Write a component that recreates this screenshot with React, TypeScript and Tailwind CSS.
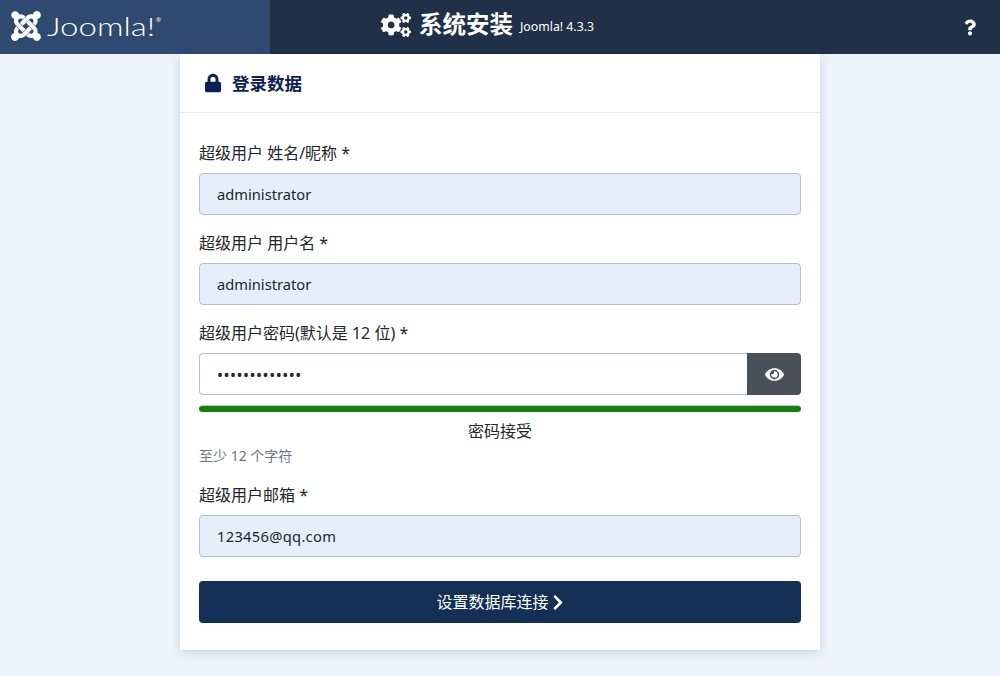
import React from 'react';
import { FaChevronRight, FaCogs, FaEye, FaJoomla, FaLock, FaQuestion } from 'react-icons/fa';

const FONT = "font-['Noto_Sans','Noto_Sans_CJK_SC',sans-serif]";

const Field: React.FC<{ label: string; value: string; valueClass?: string }> = ({ label, value, valueClass }) => (
  <div className="mb-4">
    <label className="block h-6 mb-2 leading-6 text-[16px] text-[#22262a]">{label}</label>
    <div className={`h-[42px] px-[17px] flex items-center bg-[#e7eefb] border border-[#b2bfd9] rounded text-[14.7px] text-[#22262a] ${valueClass ?? ''}`}>
      {value}
    </div>
  </div>
);

export default function App() {
  return (
    <div className={`min-h-[676px] bg-[#eff4fc] ${FONT}`}>
      {/* 头部 */}
      <header className="relative h-[54px] flex items-center bg-[#1f3047] text-white">
        <div className="relative w-[270px] h-full flex items-center pl-[9px] bg-[#2e4a70]">
          <FaJoomla className="w-[34px] h-[34px] -mt-[2px]" />
          <span className="ml-[4px] -mt-[2px] text-[26px] leading-none font-['Lato',sans-serif] font-light origin-left scale-x-[1.27]">Joomla!</span>
          <span className="absolute left-[156px] top-[17px] text-[6px] leading-none">®</span>
        </div>
        <div className="absolute left-[381px] top-0 h-full flex items-center -mt-[2px]">
          <FaCogs className="w-[30px] h-[24px] -mt-[1px]" />
          <span className="ml-[8px] text-[23.5px] font-bold">系统安装</span>
          <span className="ml-[7px] mt-[5px] text-[12.3px]">Joomla! 4.3.3</span>
        </div>
        <FaQuestion className="absolute right-[24px] top-[19px] w-[12px] h-[17px]" />
      </header>

      <main className="w-[640px] mx-auto bg-white shadow-[0_2px_10px_rgba(30,50,90,0.18)]">
        <div className="h-[59px] flex items-center pl-[25px] border-b border-[#e9ecef]">
          <FaLock className="w-[16px] h-[20px] text-[#0a1f55]" />
          <h2 className="ml-[11px] text-[17.5px] font-bold text-[#0c2150]">登录数据</h2>
        </div>
        <div className="px-[19px] pt-[28px] pb-[27px]">
          <Field label="超级用户 姓名/昵称 *" value="administrator" />
          <Field label="超级用户 用户名 *" value="administrator" />

          <div className="mb-4">
            <label className="block h-6 mb-2 leading-6 text-[16px] text-[#22262a]">超级用户密码(默认是 12 位) *</label>
            <div className="flex h-[42px]">
              <div className="flex-1 flex items-center pl-[17px] pt-[2px] bg-white border border-r-0 border-[#b2bfd9] rounded-l text-[16px] tracking-[0.5px] text-[#22262a]">
                •••••••••••••
              </div>
              <div className="w-[54px] flex items-center justify-center bg-[#495057] rounded-r text-white">
                <FaEye className="w-[19px] h-[19px]" />
              </div>
            </div>
            <div className="mt-[10px] h-[7px] rounded bg-[#14800f] border-t border-[#c4cbc4]" />
            <p className="mt-[7px] h-6 leading-6 text-center text-[16px] text-[#22262a]">密码接受</p>
            <p className="pt-[1px] h-[24px] leading-6 text-[14px] text-[#6d757d]">至少 12 个字符</p>
          </div>

          <Field label="超级用户邮箱 *" value="123456@qq.com" valueClass="tracking-[0.3px]" />

          <button className="w-full h-[42px] mt-6 flex items-center justify-center bg-[#132f53] rounded text-[16px] text-white">
            设置数据库连接
            <FaChevronRight className="ml-[3px] w-[12px] h-[17px]" />
          </button>
        </div>
      </main>
    </div>
  );
}
